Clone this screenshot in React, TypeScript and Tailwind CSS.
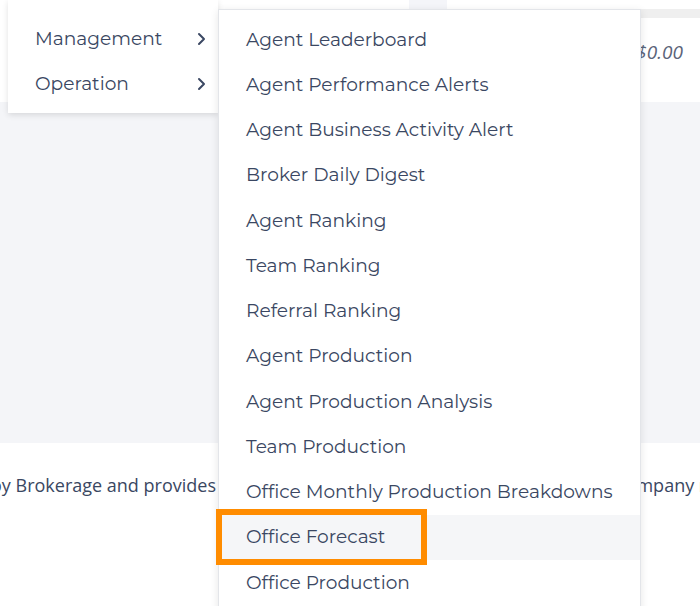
import { ReactNode } from 'react'

const reports = [
  'Agent Leaderboard',
  'Agent Performance Alerts',
  'Agent Business Activity Alert',
  'Broker Daily Digest',
  'Agent Ranking',
  'Team Ranking',
  'Referral Ranking',
  'Agent Production',
  'Agent Production Analysis',
  'Team Production',
  'Office Monthly Production Breakdowns',
  'Office Forecast',
  'Office Production',
]

function Chevron() {
  return (
    <svg width="10" height="14" viewBox="0 0 10 14" fill="none" className="shrink-0">
      <path d="M3 2l5 5-5 5" stroke="#3b4863" strokeWidth="2" strokeLinecap="round" strokeLinejoin="round" />
    </svg>
  )
}

function MenuRow({ children, active }: { children: ReactNode; active?: boolean }) {
  return (
    <div
      className={[
        'h-[45.25px] flex items-center justify-between whitespace-nowrap',
        active ? 'bg-[#f5f6f8]' : '',
      ].join(' ')}
    >
      {children}
    </div>
  )
}

export default function App() {
  return (
    <div className="relative w-[700px] h-[606px] overflow-hidden bg-white font-['Open_Sans',sans-serif] text-[#3a4762]">
      {/* page behind the menus */}
      <div className="flex flex-col">
        <div className="h-[9px] flex">
          <div className="w-[409px]" />
          <div className="w-[38px] bg-[#f4f5f9]" />
        </div>
        <div className="h-[9px] flex">
          <div className="w-[218px]" />
          <div className="flex-1 bg-[#efefef]" />
        </div>
        <div className="h-[84px] flex items-start justify-end pr-[17px] pt-[20px]">
          <span className="italic text-[19px] leading-[28px] text-[#5b6479]">$0.00</span>
        </div>
        <div className="h-[341px] bg-[#f4f5f8]" />
        <div className="flex pt-[29px] text-[18px] leading-[26px] whitespace-nowrap">
          <div className="w-[216px] overflow-hidden flex justify-end">
            <span>The Company is owned by Brokerage and provides</span>
          </div>
          <div className="w-[425px]" />
          <div className="flex-1 overflow-hidden">
            <span className="block ml-[-24px]">company represents</span>
          </div>
        </div>
      </div>

      {/* first level menu */}
      <div className="absolute left-[8px] top-0 w-[210px] h-[113px] bg-white shadow-[0_2px_6px_rgba(0,0,0,0.12)] pt-[16.5px] pl-[27px] pr-[12px] font-['Montserrat','Noto_Sans',sans-serif] text-[18.6px]">
        <MenuRow>
          <span>Management</span>
          <Chevron />
        </MenuRow>
        <MenuRow>
          <span>Operation</span>
          <Chevron />
        </MenuRow>
      </div>

      {/* reports submenu */}
      <div className="absolute left-[218px] top-[9px] w-[423px] h-[620px] bg-white border border-[#e3e5e9] shadow-[0_2px_8px_rgba(0,0,0,0.10)] pt-[7px] font-['Montserrat','Noto_Sans',sans-serif] text-[18.6px]">
        {reports.map((r) => (
          <MenuRow key={r} active={r === 'Office Forecast'}>
            <span className="pl-[27px]">{r}</span>
          </MenuRow>
        ))}
      </div>

      {/* highlight box */}
      <div className="absolute left-[216px] top-[509px] w-[211px] h-[56px] border-[6px] border-[#ff8c00]" />
    </div>
  )
}
